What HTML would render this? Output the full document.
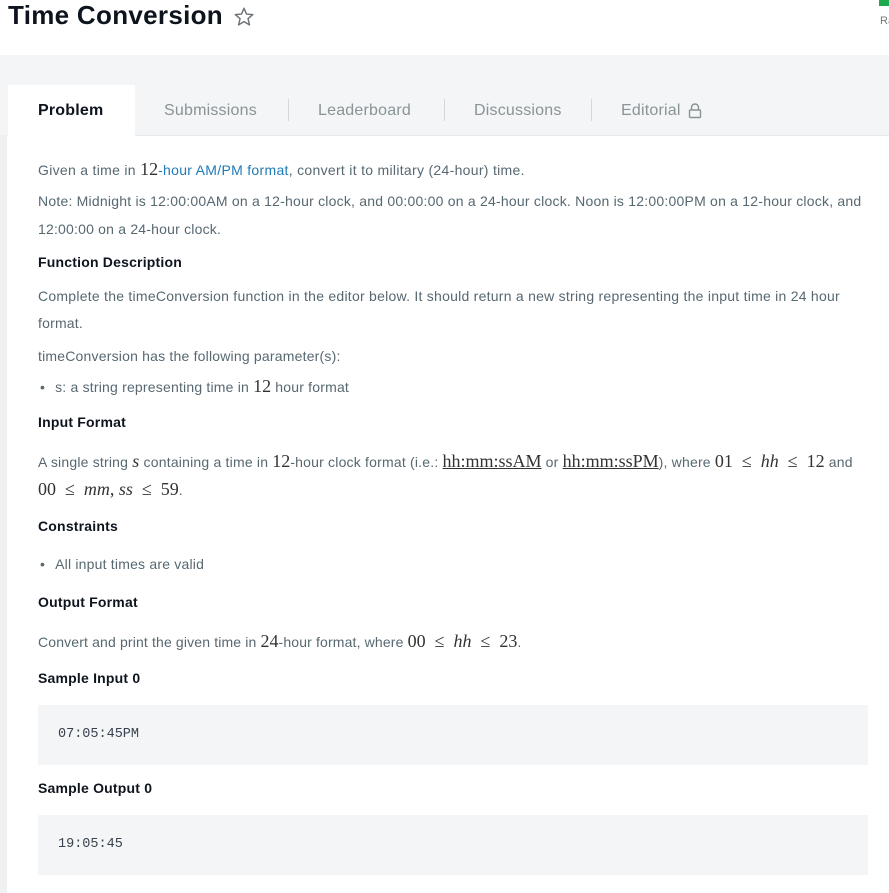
<!DOCTYPE html>
<html><head><meta charset="utf-8"><style>
body{margin:0;width:889px;height:893px;overflow:hidden;background:#fff;font-family:"Liberation Sans",sans-serif;position:relative}
.a{position:absolute;white-space:nowrap}
.t{font-size:14px;color:#576871;left:38px;letter-spacing:0.2px}
.h{font-size:14px;color:#0e141e;font-weight:bold;left:38px;letter-spacing:0.2px}
.m{font-family:"Liberation Serif",serif;font-size:18px;color:#333;letter-spacing:0}
.mi{font-family:"Liberation Serif",serif;font-style:italic;font-size:18px;color:#333}
.tab{position:absolute;top:102px;font-size:16px;color:#8a9396;letter-spacing:0.2px}
.sep{position:absolute;top:99px;width:1px;height:22px;background:#d4d8da}
.code{position:absolute;left:38px;width:830px;height:60px;background:#f3f5f7}
.code span{position:absolute;left:20px;top:22px;font-family:"Liberation Mono",monospace;font-size:13.5px;color:#39424e}
</style></head><body>
<div class="a" style="left:8px;top:0px;font-size:26px;font-weight:bold;color:#0e141e;letter-spacing:0.3px">Time Conversion</div>
<svg class="a" style="left:233px;top:6px" width="22" height="22" viewBox="0 0 24 24"><path d="M12 2.5l2.8 6.3 6.8.6-5.2 4.5 1.6 6.7L12 17l-5.9 3.6 1.6-6.7L2.5 9.4l6.8-.6z" fill="none" stroke="#6b7579" stroke-width="1.6" stroke-linejoin="round"/></svg>
<div class="a" style="left:879px;top:0;width:10px;height:6px;background:#1ba94c"></div>
<div class="a" style="left:880px;top:15px;font-size:11px;color:#777">Ra</div>
<div class="a" style="left:0;top:55px;width:889px;height:80px;background:#f3f5f7;border-bottom:1px solid #e6e9eb"></div>
<div class="a" style="left:0;top:135px;width:7px;height:758px;background:#eef0f2"></div>
<div class="a" style="left:8px;top:85px;width:127px;height:51px;background:#fff"></div>
<div class="tab" style="left:38px;color:#0e141e;font-weight:bold">Problem</div>
<div class="tab" style="left:164px">Submissions</div>
<div class="sep" style="left:288px"></div>
<div class="tab" style="left:318px">Leaderboard</div>
<div class="sep" style="left:444px"></div>
<div class="tab" style="left:474px">Discussions</div>
<div class="sep" style="left:591px"></div>
<div class="tab" style="left:621px">Editorial</div>
<svg class="a" style="left:688px;top:103px" width="14" height="16" viewBox="0 0 14 16"><path d="M3.5 7V4.5a3.5 3.5 0 0 1 7 0V7" fill="none" stroke="#8a9396" stroke-width="1.4"/><rect x="1.5" y="7" width="11" height="7.5" rx="1" fill="none" stroke="#8a9396" stroke-width="1.4"/></svg>

<div class="a t" style="top:159px;letter-spacing:0.3px">Given a time in <span class="m">12</span><span style="color:#1f7ab8">-hour AM/PM format</span>, convert it to military (24-hour) time.</div>
<div class="a t" style="top:193px;letter-spacing:0.22px">Note: Midnight is 12:00:00AM on a 12-hour clock, and 00:00:00 on a 24-hour clock. Noon is 12:00:00PM on a 12-hour clock, and</div>
<div class="a t" style="top:221px">12:00:00 on a 24-hour clock.</div>
<div class="a h" style="top:254px">Function Description</div>
<div class="a t" style="top:288px;letter-spacing:0.25px">Complete the timeConversion function in the editor below. It should return a new string representing the input time in 24 hour</div>
<div class="a t" style="top:315px">format.</div>
<div class="a t" style="top:348px">timeConversion has the following parameter(s):</div>
<div class="a t" style="top:376px"><span style="margin-left:2px;margin-right:10px">•</span>s: a string representing time in <span class="m">12</span> hour format</div>
<div class="a h" style="top:414px">Input Format</div>
<div class="a t" style="top:451px;letter-spacing:0.2px">A single string <span class="mi">s</span> containing a time in <span class="m">12</span>-hour clock format (i.e.: <span class="m" style="text-decoration:underline">hh:mm:ssAM</span> or <span class="m" style="text-decoration:underline">hh:mm:ssPM</span>), where <span class="m">01 &nbsp;≤ &nbsp;<i>hh</i> &nbsp;≤ &nbsp;12</span> and</div>
<div class="a t" style="top:479px"><span class="m">00 &nbsp;≤ &nbsp;<i>mm</i>, <i>ss</i> &nbsp;≤ &nbsp;59</span>.</div>
<div class="a h" style="top:518px">Constraints</div>
<div class="a t" style="top:556px"><span style="margin-left:2px;margin-right:10px">•</span>All input times are valid</div>
<div class="a h" style="top:594px">Output Format</div>
<div class="a t" style="top:631px;letter-spacing:0.15px">Convert and print the given time in <span class="m">24</span>-hour format, where <span class="m">00 &nbsp;≤ &nbsp;<i>hh</i> &nbsp;≤ &nbsp;23</span>.</div>
<div class="a h" style="top:670px">Sample Input 0</div>
<div class="code" style="top:705px"><span>07:05:45PM</span></div>
<div class="a h" style="top:780px">Sample Output 0</div>
<div class="code" style="top:815px"><span>19:05:45</span></div>
</body></html>
